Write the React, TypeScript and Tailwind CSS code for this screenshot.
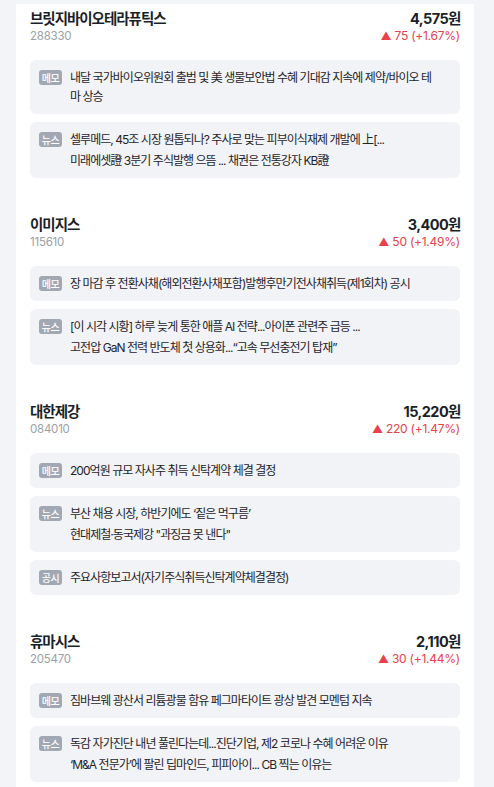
import React from 'react';

type Line = { tag: '메모' | '뉴스' | '공시'; lines: string[]; wrap?: boolean };

interface Stock {
  name: string;
  code: string;
  price: string;
  diff: string;
  rate: string;
  items: Line[];
}

const stocks: Stock[] = [
  {
    name: '브릿지바이오테라퓨틱스',
    code: '288330',
    price: '4,575',
    diff: '75',
    rate: '+1.67%',
    items: [
      {
        tag: '메모',
        wrap: true,
        lines: ['내달 국가바이오위원회 출범 및 美 생물보안법 수혜 기대감 지속에 제약/바이오 테마 상승'],
      },
      {
        tag: '뉴스',
        lines: [
          '셀루메드, 45조 시장 원톱되나? 주사로 맞는 피부이식재제 개발에 上[...',
          '미래에셋證 3분기 주식발행 으뜸 ... 채권은 전통강자 KB證',
        ],
      },
    ],
  },
  {
    name: '이미지스',
    code: '115610',
    price: '3,400',
    diff: '50',
    rate: '+1.49%',
    items: [
      { tag: '메모', lines: ['장 마감 후 전환사채(해외전환사채포함)발행후만기전사채취득(제1회차) 공시'] },
      {
        tag: '뉴스',
        lines: [
          '[이 시각 시황] 하루 늦게 통한 애플 AI 전략...아이폰 관련주 급등 ...',
          '고전압 GaN 전력 반도체 첫 상용화...“고속 무선충전기 탑재”',
        ],
      },
    ],
  },
  {
    name: '대한제강',
    code: '084010',
    price: '15,220',
    diff: '220',
    rate: '+1.47%',
    items: [
      { tag: '메모', lines: ['200억원 규모 자사주 취득 신탁계약 체결 결정'] },
      {
        tag: '뉴스',
        lines: ['부산 채용 시장, 하반기에도 ‘짙은 먹구름’', '현대제철·동국제강 "과징금 못 낸다"'],
      },
      { tag: '공시', lines: ['주요사항보고서(자기주식취득신탁계약체결결정)'] },
    ],
  },
  {
    name: '휴마시스',
    code: '205470',
    price: '2,110',
    diff: '30',
    rate: '+1.44%',
    items: [
      { tag: '메모', lines: ['짐바브웨 광산서 리튬광물 함유 페그마타이트 광상 발견 모멘텀 지속'] },
      {
        tag: '뉴스',
        lines: [
          '독감 자가진단 내년 풀린다는데...진단기업, 제2 코로나 수혜 어려운 이유',
          '‘M&A 전문가’에 팔린 딥마인드, 피피아이... CB 찍는 이유는',
        ],
      },
    ],
  },
];

const font = { fontFamily: 'Inter, "Noto Sans CJK KR", sans-serif' };

function Badge({ label }: { label: string }) {
  return (
    <span className="mt-[2px] flex h-[15px] w-[23px] shrink-0 items-center justify-center rounded-[3px] bg-[#a1a8b4] text-[10px] font-medium leading-none tracking-[-0.05em] text-white">
      {label}
    </span>
  );
}

function InfoBox({ item }: { item: Line }) {
  return (
    <div className="flex gap-[8px] rounded-[6px] bg-[#f2f3f6] py-[8px] pl-[9px] pr-[24px]">
      <Badge label={item.tag} />
      {item.wrap ? (
        <p className="text-[12px] leading-[19px] tracking-[-0.08em] text-[#1f242b]">{item.lines[0]}</p>
      ) : (
        <div className="flex flex-col gap-[2px]">
          {item.lines.map((l) => (
            <p key={l} className="whitespace-nowrap text-[12px] leading-[19px] tracking-[-0.08em] text-[#1f242b]">
              {l}
            </p>
          ))}
        </div>
      )}
    </div>
  );
}

function StockSection({ stock }: { stock: Stock }) {
  return (
    <section className="pb-[38px]">
      <div className="mb-[16px] flex items-start justify-between">
        <div>
          <div className="text-[14.5px] font-bold leading-[18px] tracking-[-0.07em] text-[#191f28]">{stock.name}</div>
          <div className="text-[11.5px] leading-[16px] tracking-[-0.02em] text-[#9aa0a8]">{stock.code}</div>
        </div>
        <div className="text-right">
          <div className="text-[14.5px] font-bold leading-[18px] tracking-[-0.04em] text-[#191f28]">
            {stock.price}
            <span className="tracking-[-0.1em]">원</span>
          </div>
          <div className="text-[12px] leading-[16px] tracking-[-0.02em] text-[#e8414b]">
            <span className="text-[11px]">▲</span> {stock.diff} ({stock.rate})
          </div>
        </div>
      </div>
      <div className="flex flex-col gap-[8px]">
        {stock.items.map((it) => (
          <InfoBox key={it.tag} item={it} />
        ))}
      </div>
    </section>
  );
}

export default function App() {
  return (
    <div className="min-h-screen bg-[#f2f4f8] pl-4 pr-[20px] pt-1" style={font}>
      <div className="min-h-[783px] bg-white px-[14px] pt-[6px]">
        {stocks.map((s) => (
          <StockSection key={s.code} stock={s} />
        ))}
      </div>
    </div>
  );
}
